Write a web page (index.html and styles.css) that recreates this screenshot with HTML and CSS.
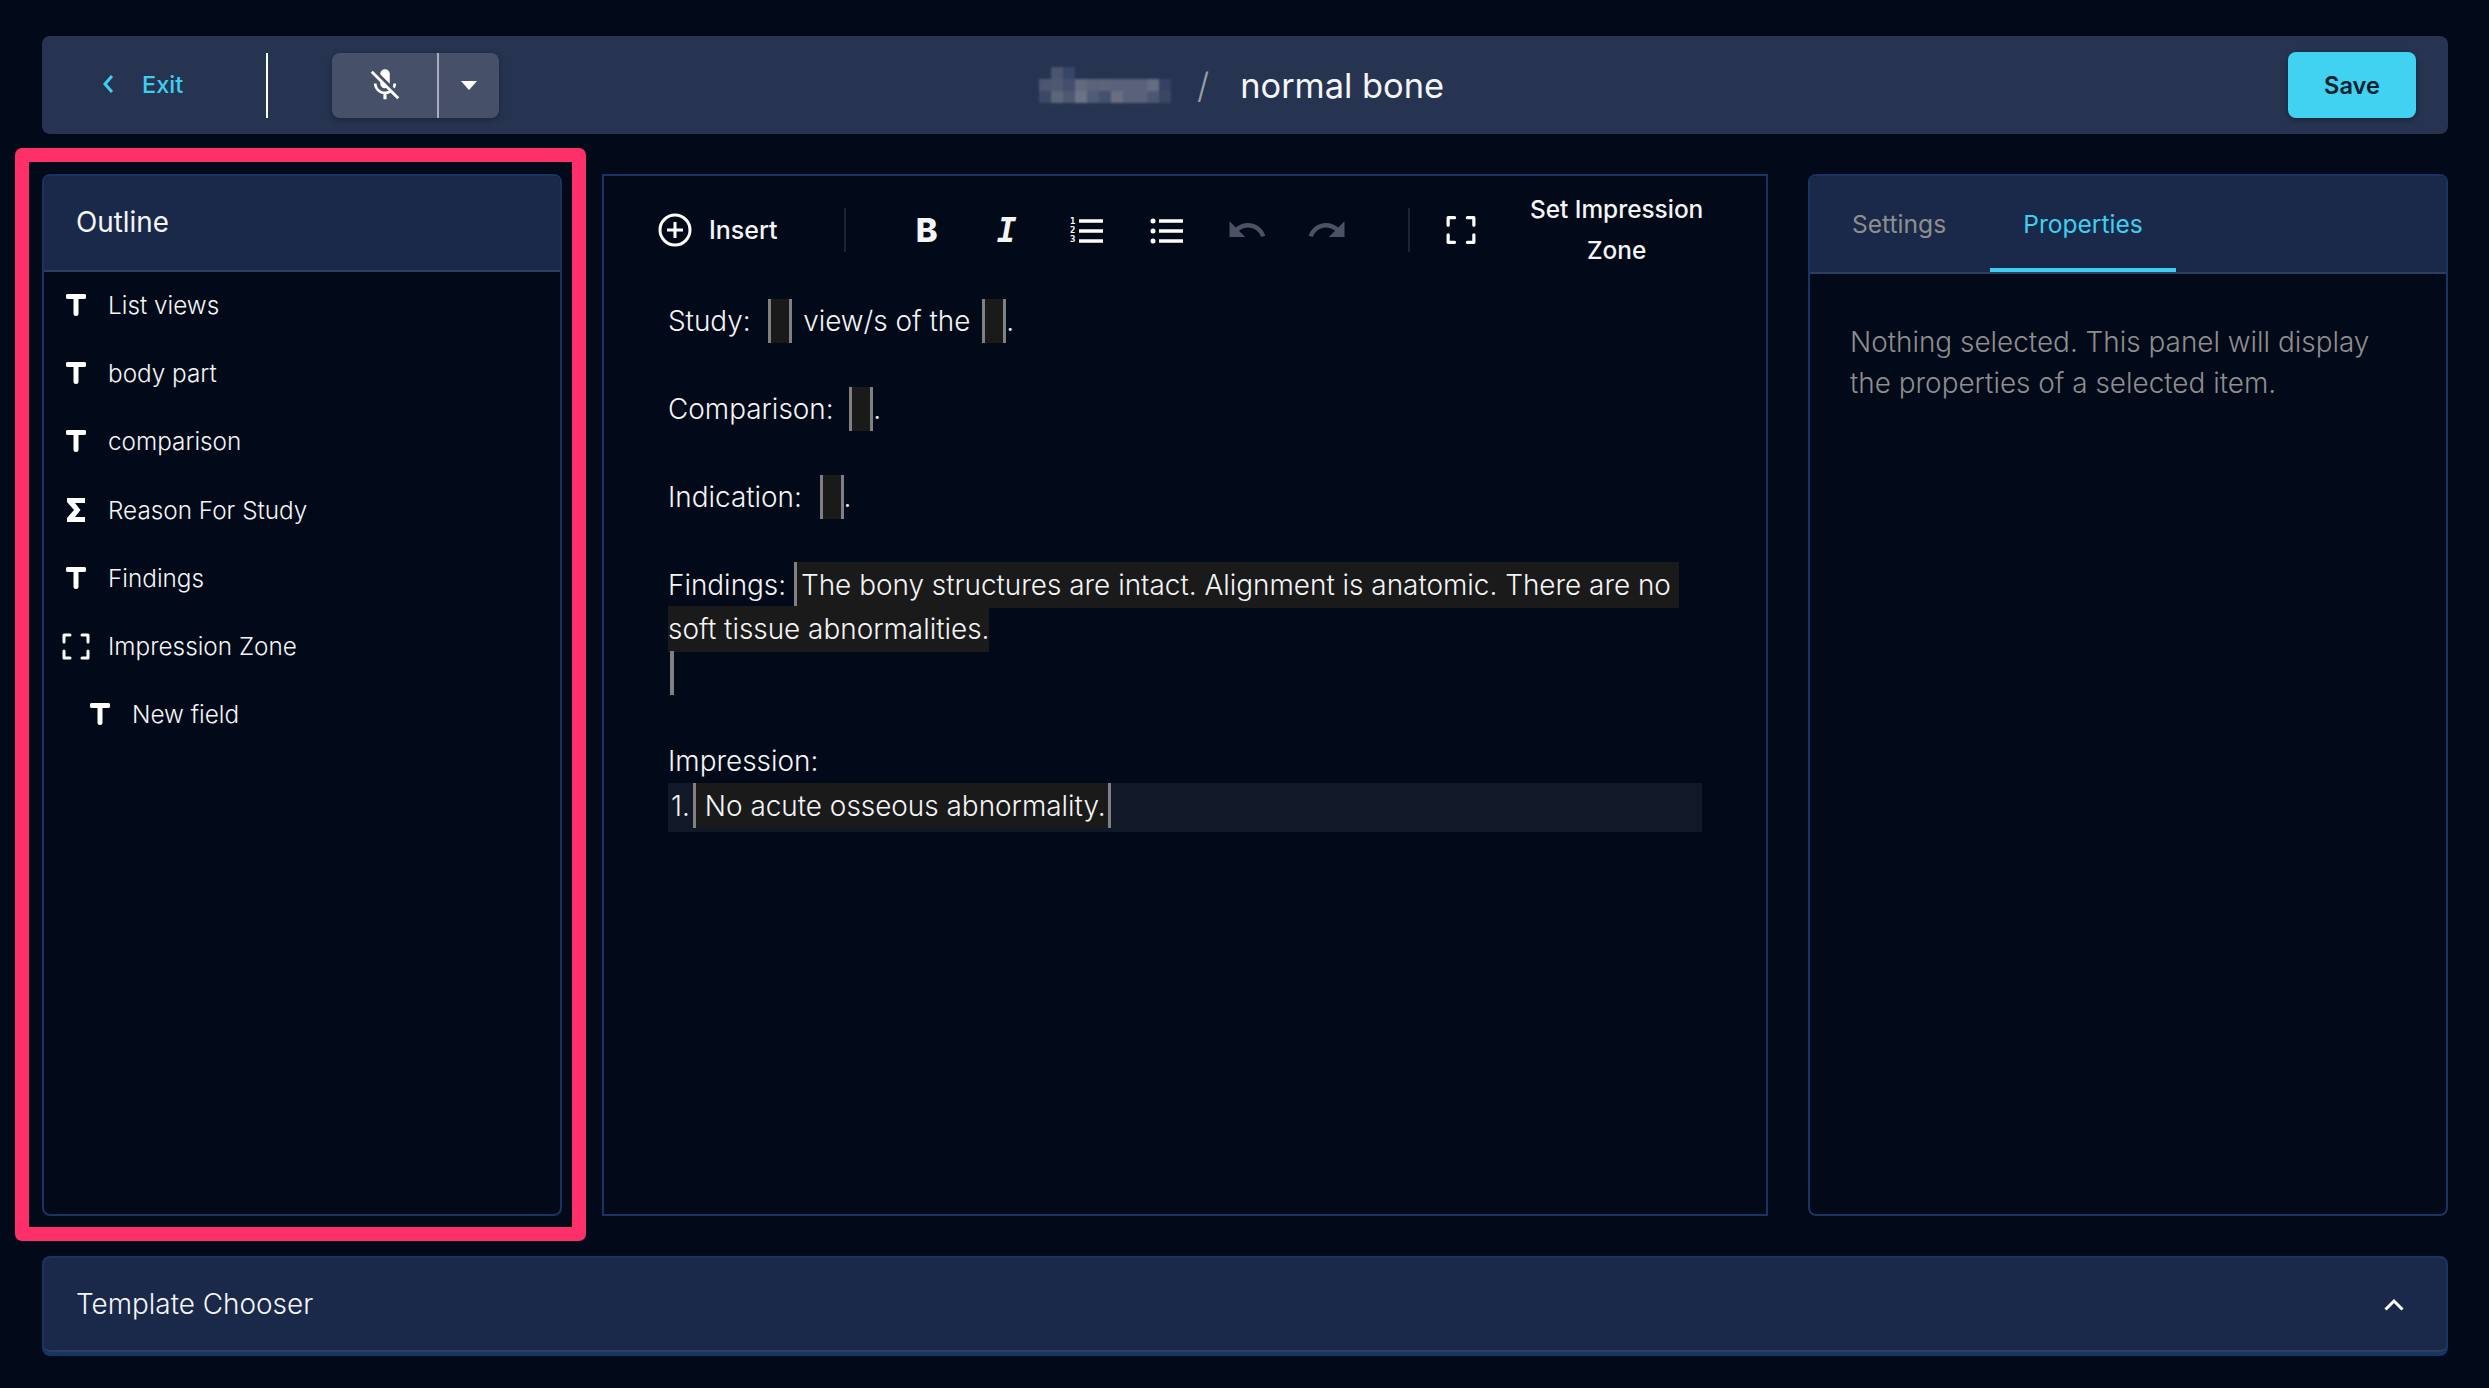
FILE: index.html
```html
<!DOCTYPE html>
<html lang="en">
  <head>
    <meta charset="UTF-8" />
    <title>normal bone</title>
    <link rel="stylesheet" href="styles.css">
  </head>
  <body>
    <!-- TOP BAR -->
    <header class="topbar">
      <a class="exit">
        <svg class="exit-icon" viewBox="0 0 12 20"><path d="M10 2 3 10l7 8" /></svg>
        Exit
      </a>
      <span class="topbar-line"></span>
      <div class="mic">
        <button class="mic-main">
          <svg class="mic-icon" viewBox="0 0 24 24"><path d="M19 11h-1.7c0 .74-.16 1.43-.43 2.05l1.23 1.23c.56-.98.9-2.09.9-3.28zm-4.02.17c0-.06.02-.11.02-.17V5c0-1.66-1.34-3-3-3s-3 1.34-3 3v.18l5.98 5.99zM4.27 3L3 4.27l6.01 6.01V11c0 1.66 1.33 3 2.99 3 .22 0 .44-.03.65-.08l1.66 1.66c-.71.33-1.5.52-2.31.52-2.76 0-5.3-2.1-5.3-5.1H5c0 3.41 2.72 6.23 6 6.72V21h2v-3.28c.91-.13 1.77-.45 2.54-.9L19.73 21 21 19.73 4.27 3z" /></svg>
        </button>
        <button class="mic-more"><span class="caret-down"></span></button>
      </div>
      <div class="crumbs">
        <!-- name is pixelated in the picture -->
        <svg class="mosaic" viewBox="0 0 132 36" shape-rendering="crispEdges">
          <rect x="12" y="0" width="12" height="12" fill="#4a5570" />
          <rect x="24" y="0" width="12" height="12" fill="#37456a" />
          <rect x="0" y="12" width="12" height="12" fill="#4b5670" />
          <rect x="12" y="12" width="12" height="12" fill="#4d5871" />
          <rect x="24" y="12" width="12" height="12" fill="#434f6a" />
          <rect x="36" y="12" width="12" height="12" fill="#626a7e" />
          <rect x="48" y="12" width="12" height="12" fill="#5a637a" />
          <rect x="60" y="12" width="12" height="12" fill="#5b647b" />
          <rect x="72" y="12" width="36" height="12" fill="#59627a" />
          <rect x="108" y="12" width="12" height="12" fill="#636c82" />
          <rect x="120" y="12" width="12" height="12" fill="#364263" />
          <rect x="0" y="24" width="12" height="12" fill="#3b4866" />
          <rect x="12" y="24" width="12" height="12" fill="#5d6579" />
          <rect x="24" y="24" width="12" height="12" fill="#4d5871" />
          <rect x="36" y="24" width="12" height="12" fill="#6c7386" />
          <rect x="48" y="24" width="12" height="12" fill="#4f5b77" />
          <rect x="60" y="24" width="12" height="12" fill="#44516d" />
          <rect x="72" y="24" width="12" height="12" fill="#696f83" />
          <rect x="84" y="24" width="24" height="12" fill="#596279" />
          <rect x="108" y="24" width="12" height="12" fill="#4c5873" />
          <rect x="120" y="24" width="12" height="12" fill="#3a4663" />
        </svg>
        <span class="slash">/</span>
        <span class="doc-name">normal bone</span>
      </div>
      <button class="btn-save">Save</button>
    </header>

    <main class="layout">
      <!-- OUTLINE -->
      <section class="panel outline">
        <h2 class="panel-title">Outline</h2>
        <ul class="tree">
          <li class="tree-row">
            <span class="tree-icon"><svg class="icon-t" viewBox="0 0 20 22"><path d="M2 2.5h16M10 2.5v17" /></svg></span>
            List views
          </li>
          <li class="tree-row">
            <span class="tree-icon"><svg class="icon-t" viewBox="0 0 20 22"><path d="M2 2.5h16M10 2.5v17" /></svg></span>
            body part
          </li>
          <li class="tree-row">
            <span class="tree-icon"><svg class="icon-t" viewBox="0 0 20 22"><path d="M2 2.5h16M10 2.5v17" /></svg></span>
            comparison
          </li>
          <li class="tree-row">
            <span class="tree-icon"><svg class="icon-sum" viewBox="0 0 18 24"><path d="M0 0h18v5H8l5.5 7L8 19h10v5H0v-4l7-8-7-8z" /></svg></span>
            Reason For Study
          </li>
          <li class="tree-row">
            <span class="tree-icon"><svg class="icon-t" viewBox="0 0 20 22"><path d="M2 2.5h16M10 2.5v17" /></svg></span>
            Findings
          </li>
          <li class="tree-row">
            <span class="tree-icon"><svg class="icon-zone" viewBox="0 0 28 27"><path d="M2 9V2h6M20 2h6v7M26 18v7h-6M8 25H2v-7" /></svg></span>
            Impression Zone
          </li>
          <li class="tree-row nested">
            <span class="tree-icon"><svg class="icon-t" viewBox="0 0 20 22"><path d="M2 2.5h16M10 2.5v17" /></svg></span>
            New field
          </li>
        </ul>
      </section>

      <!-- EDITOR -->
      <section class="editor">
        <div class="toolbar">
          <button class="insert">
            <svg class="insert-icon" viewBox="0 0 34 34"><circle cx="17" cy="17" r="15" /><path d="M17 9v16M9 17h16" /></svg>
            Insert
          </button>
          <span class="tool-line"></span>
          <button class="tool tool-b">B</button>
          <button class="tool tool-i">I</button>
          <button class="tool">
            <svg class="list-icon" viewBox="0 0 34 26">
              <text x="0" y="7">1</text><text x="0" y="16">2</text><text x="0" y="25">3</text>
              <path d="M9 4h24M9 14h24M9 24h24" />
            </svg>
          </button>
          <button class="tool">
            <svg class="list-icon" viewBox="0 0 34 26">
              <circle cx="3" cy="4" r="2.5" /><circle cx="3" cy="14" r="2.5" /><circle cx="3" cy="24" r="2.5" />
              <path d="M9 4h24M9 14h24M9 24h24" />
            </svg>
          </button>
          <button class="tool">
            <svg class="history-icon" viewBox="0 0 24 24"><path d="M12.5 8c-2.65 0-5.05.99-6.9 2.6L2 7v9h9l-3.62-3.62c1.39-1.16 3.16-1.88 5.12-1.88 3.54 0 6.55 2.31 7.6 5.5l2.37-.78C21.08 11.03 17.15 8 12.5 8z" /></svg>
          </button>
          <button class="tool">
            <svg class="history-icon" viewBox="0 0 24 24"><path d="M18.4 10.6C16.55 8.99 14.15 8 11.5 8c-4.65 0-8.58 3.03-9.96 7.22L3.9 16c1.05-3.19 4.05-5.5 7.6-5.5 1.95 0 3.73.72 5.12 1.88L13 16h9V7l-3.6 3.6z" /></svg>
          </button>
          <span class="tool-line"></span>
          <button class="tool tool-zone">
            <svg class="icon-zone wide" viewBox="0 0 28 27"><path d="M2 9V2h6M20 2h6v7M26 18v7h-6M8 25H2v-7" /></svg>
          </button>
          <button class="set-zone">Set Impression Zone</button>
        </div>

        <div class="report">
          <p>Study:&nbsp; <span class="slot"></span> view/s of the <span class="slot wide-gap"></span>.</p>
          <p>&nbsp;</p>
          <p>Comparison:&nbsp; <span class="slot pull"></span>.</p>
          <p>&nbsp;</p>
          <p>Indication:&nbsp; <span class="slot tight"></span>.</p>
          <p>&nbsp;</p>
          <p>Findings: <span class="fill first">The bony structures are intact. Alignment is anatomic. There are no&nbsp;<br />soft tissue abnormalities.</span><br /><span class="end-bar"></span></p>
          <p>&nbsp;</p>
          <p>Impression:</p>
          <p class="zone-row">1.<span class="fill whole">No acute osseous abnormality.</span></p>
        </div>
      </section>

      <!-- PROPERTIES -->
      <section class="panel props">
        <div class="tabs">
          <button class="tab">Settings</button>
          <button class="tab active">Properties</button>
        </div>
        <p class="props-body">Nothing selected. This panel will display the properties of a selected item.</p>
      </section>
    </main>

    <footer class="chooser">
      <span class="chooser-title">Template Chooser</span>
      <svg class="chooser-icon" viewBox="0 0 20 13"><path d="M1.5 11.5 10 3l8.5 8.5" /></svg>
    </footer>
  </body>
</html>
```

FILE: styles.css
```css
* {
  margin: 0;
  padding: 0;
  box-sizing: border-box;
}

body {
  font-family: Inter, "Liberation Sans", sans-serif;
  color: #f4f5f6;
  background-color: #020919;
  padding: 36px 41px 0 42px;
  height: 1388px;
  overflow: hidden;
}

button {
  background: none;
  border: none;
  color: inherit;
  font-family: inherit;
}

/* TOP BAR */
.topbar {
  height: 98px;
  display: flex;
  align-items: center;
  padding: 0 32px 0 60px;
  background-color: #263452;
  border-radius: 8px;
}

.exit {
  display: flex;
  align-items: center;
  gap: 28px;
  width: 164px;
  padding-bottom: 2px;
  font-size: 23.5px;
  font-weight: 500;
  color: #3ecff0;
}

.exit-icon {
  width: 12px;
  height: 20px;
  fill: none;
  stroke: #3ecff0;
  stroke-width: 3;
}

.topbar-line {
  width: 2px;
  height: 65px;
  background-color: #fff;
}

.mic {
  display: flex;
  height: 65px;
  margin-left: 64px;
  background-color: #465169;
  border-radius: 8px;
  box-shadow: 0 2px 6px rgba(0, 0, 0, 0.3);
}

.mic-main {
  width: 107px;
  display: flex;
  align-items: center;
  justify-content: center;
  border-right: 2px solid #a9afba;
}

.mic-icon {
  width: 38px;
  height: 38px;
  fill: #fff;
}

.mic-more {
  width: 60px;
  display: flex;
  align-items: center;
  justify-content: center;
}

.caret-down {
  border-left: 8px solid transparent;
  border-right: 8px solid transparent;
  border-top: 9px solid #fff;
}

.crumbs {
  display: flex;
  align-items: center;
  margin-left: 540px;
}

.mosaic {
  width: 132px;
  height: 36px;
  filter: blur(1px);
}

.slash {
  margin-left: 26px;
  font-size: 35px;
  font-weight: 300;
  color: #9a9fa9;
}

.doc-name {
  margin-left: 31px;
  font-size: 34.4px;
}

.btn-save {
  margin-left: auto;
  width: 128px;
  height: 66px;
  font-size: 23.6px;
  font-weight: 600;
  color: #07202e;
  background-color: #41d1f1;
  border-radius: 8px;
  box-shadow: 0 2px 6px rgba(0, 0, 0, 0.3);
}

/* LAYOUT */
.layout {
  display: grid;
  grid-template-columns: 520px 1fr 640px;
  gap: 40px;
  height: 1042px;
  margin-top: 40px;
}

.panel {
  border: 2px solid #173463;
  border-radius: 8px;
}

/* OUTLINE */
.outline {
  position: relative;
}

/* pink annotation frame drawn over the picture */
.outline::after {
  content: "";
  position: absolute;
  top: -28px;
  right: -26px;
  bottom: -27px;
  left: -29px;
  border: 14px solid #ff2f6a;
  border-radius: 7px;
  pointer-events: none;
}

.panel-title {
  height: 96px;
  padding: 0 32px;
  font-size: 27.8px;
  font-weight: 400;
  line-height: 92px;
  background-color: #1a2949;
  border-bottom: 2px solid #2f3e5c;
  border-radius: 6px 6px 0 0;
}

.tree {
  list-style: none;
  margin-top: -1px;
}

.tree-row {
  display: flex;
  align-items: center;
  gap: 18px;
  height: 68.2px;
  padding-left: 18px;
  font-size: 24.3px;
  font-weight: 300;
}

.tree-row.nested {
  padding-left: 42px;
}

.tree-icon {
  width: 28px;
  display: flex;
  justify-content: center;
}

.icon-t {
  width: 20px;
  height: 22px;
  fill: none;
  stroke: #fff;
  stroke-width: 5;
  stroke-linecap: round;
}

.icon-sum {
  width: 18px;
  height: 24px;
  fill: #fff;
}

.icon-zone {
  width: 28px;
  height: 27px;
  fill: none;
  stroke: #fff;
  stroke-width: 3;
  stroke-linecap: round;
  stroke-linejoin: round;
}

.icon-zone.wide {
  width: 30px;
  height: 30px;
}

/* EDITOR */
.editor {
  border: 2px solid #173463;
  padding: 0 64px;
}

.toolbar {
  display: flex;
  align-items: center;
  height: 108px;
  margin: 0 -64px 15px;
  padding-left: 54px;
}

.insert {
  display: flex;
  align-items: center;
  gap: 17px;
  font-size: 25px;
  font-weight: 500;
}

.insert-icon {
  width: 34px;
  height: 34px;
  fill: none;
  stroke: #fff;
  stroke-width: 3;
}

.tool-line {
  width: 2px;
  height: 44px;
  margin: 0 41px 0 66px;
  background-color: #1c2538;
}

.tool-line ~ .tool-line {
  margin: 0 11px 0 41px;
}

.tool {
  width: 80px;
  display: flex;
  align-items: center;
  justify-content: center;
}

.tool-b {
  font-size: 33px;
  font-weight: 800;
}

.tool-i {
  font-family: "DejaVu Sans Mono", monospace;
  font-size: 33px;
  font-weight: 700;
  font-style: italic;
}

.list-icon {
  width: 34px;
  height: 26px;
  overflow: visible;
  fill: #fff;
  font-size: 9px;
  font-family: "DejaVu Sans Mono", monospace;
  font-weight: 700;
}

.list-icon path {
  fill: none;
  stroke: #fff;
  stroke-width: 3.6;
}

.history-icon {
  width: 42px;
  height: 42px;
  fill: #4a5263;
}

.set-zone {
  width: 174px;
  margin-left: 29px;
  font-size: 24.4px;
  font-weight: 500;
  line-height: 41px;
}

.report {
  font-size: 27.9px;
  font-weight: 300;
  line-height: 44px;
}

.slot {
  display: inline-block;
  width: 24px;
  height: 44px;
  margin: 0 3px 0 2px;
  vertical-align: top;
  background-color: #1a1a1a;
  border-left: 3px solid #808080;
  border-right: 3px solid #808080;
}

.slot.tight {
  margin-right: 0;
}

.slot.pull {
  margin: 0;
}

.slot.wide-gap {
  margin: 0 0 0 4px;
}

.fill {
  padding: 6px 0;
  background-color: #1a1a1a;
}

.fill.first {
  padding-left: 4px;
  border-left: 3px solid #808080;
}

.fill.whole {
  display: inline-block;
  height: 45px;
  padding: 0 2px 0 9px;
  margin-left: 3px;
  line-height: 46px;
  vertical-align: top;
  border-left: 3px solid #808080;
  border-right: 3px solid #808080;
}

.end-bar {
  display: inline-block;
  width: 4px;
  height: 44px;
  margin-left: 2px;
  vertical-align: top;
  background-color: #808080;
}

.zone-row {
  height: 49px;
  padding-left: 3px;
  line-height: 46px;
  background-color: #111827;
}

/* PROPERTIES */
.tabs {
  display: flex;
  gap: 11px;
  height: 98px;
  padding-left: 9px;
  background-color: #1a2949;
  border-bottom: 2px solid #2f3e5c;
  border-radius: 6px 6px 0 0;
}

.tab {
  padding: 0 33px;
  font-size: 24.6px;
  color: #8e8e8e;
}

.tab.active {
  color: #3ecff0;
  box-shadow: inset 0 -4px 0 #3ecff0;
}

.props-body {
  padding: 48px 40px;
  font-size: 27.9px;
  font-weight: 300;
  line-height: 41px;
  color: #8e8e8e;
}

/* CHOOSER */
.chooser {
  display: flex;
  align-items: center;
  justify-content: space-between;
  height: 100px;
  margin-top: 40px;
  padding: 0 42px 2px 32px;
  background-color: #1a2949;
  border: 2px solid #173463;
  border-bottom-width: 4px;
  border-radius: 8px;
  box-shadow: inset 0 -2px 0 #2f3e5c;
}

.chooser-title {
  font-size: 27.9px;
  font-weight: 300;
}

.chooser-icon {
  width: 20px;
  height: 13px;
  fill: none;
  stroke: #fff;
  stroke-width: 3;
}
```
